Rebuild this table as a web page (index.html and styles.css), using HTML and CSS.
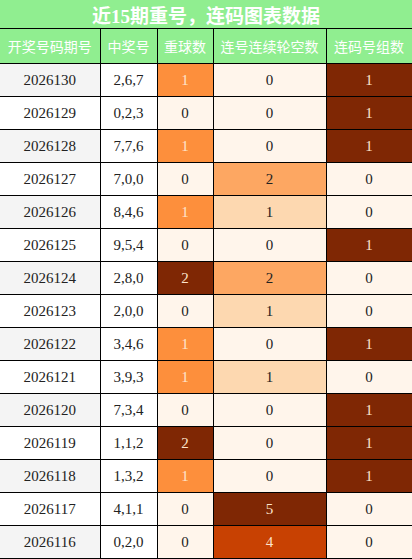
FILE: index.html
```html
<!DOCTYPE html>
<html lang="zh">
<head>
  <meta charset="UTF-8" />
  <title>近15期重号，连码图表数据</title>
  <link rel="stylesheet" href="styles.css">
</head>
<body>
  <table class="chart">
    <colgroup>
      <col class="c-issue"><col class="c-nums"><col class="c-rep"><col class="c-gap"><col class="c-group">
    </colgroup>
    <thead>
      <tr><th colspan="5" class="title">近15期重号，连码图表数据</th></tr>
      <tr class="head">
        <th>开奖号码期号</th><th>中奖号</th><th>重球数</th><th>连号连续轮空数</th><th>连码号组数</th>
      </tr>
    </thead>
    <tbody>
      <tr><td>2026130</td><td>2,6,7</td><td class="h3">1</td><td class="h0">0</td><td class="h5">1</td></tr>
      <tr><td>2026129</td><td>0,2,3</td><td class="h0">0</td><td class="h0">0</td><td class="h5">1</td></tr>
      <tr><td>2026128</td><td>7,7,6</td><td class="h3">1</td><td class="h0">0</td><td class="h5">1</td></tr>
      <tr><td>2026127</td><td>7,0,0</td><td class="h0">0</td><td class="h2">2</td><td class="h0">0</td></tr>
      <tr><td>2026126</td><td>8,4,6</td><td class="h3">1</td><td class="h1">1</td><td class="h0">0</td></tr>
      <tr><td>2026125</td><td>9,5,4</td><td class="h0">0</td><td class="h0">0</td><td class="h5">1</td></tr>
      <tr><td>2026124</td><td>2,8,0</td><td class="h5">2</td><td class="h2">2</td><td class="h0">0</td></tr>
      <tr><td>2026123</td><td>2,0,0</td><td class="h0">0</td><td class="h1">1</td><td class="h0">0</td></tr>
      <tr><td>2026122</td><td>3,4,6</td><td class="h3">1</td><td class="h0">0</td><td class="h5">1</td></tr>
      <tr><td>2026121</td><td>3,9,3</td><td class="h3">1</td><td class="h1">1</td><td class="h0">0</td></tr>
      <tr><td>2026120</td><td>7,3,4</td><td class="h0">0</td><td class="h0">0</td><td class="h5">1</td></tr>
      <tr><td>2026119</td><td>1,1,2</td><td class="h5">2</td><td class="h0">0</td><td class="h5">1</td></tr>
      <tr><td>2026118</td><td>1,3,2</td><td class="h3">1</td><td class="h0">0</td><td class="h5">1</td></tr>
      <tr><td>2026117</td><td>4,1,1</td><td class="h0">0</td><td class="h5">5</td><td class="h0">0</td></tr>
      <tr><td>2026116</td><td>0,2,0</td><td class="h0">0</td><td class="h4">4</td><td class="h0">0</td></tr>
    </tbody>
  </table>
</body>
</html>
```

FILE: styles.css
```css
body {
  margin: 0;
  background: #fff;
  font-family: "Liberation Serif", "Noto Sans CJK SC", serif;
}
.chart {
  width: 412px;
  border-collapse: collapse;
  table-layout: fixed;
  color: #222;
}
.c-issue { width: 100px; }
.c-nums { width: 57px; }
.c-rep { width: 56px; }
.c-gap { width: 113px; }
.c-group { width: 86px; }
.chart th, .chart td {
  border: 1px solid #000;
  text-align: center;
  padding: 0;
}
.chart .title {
  height: 28px;
  background: #90ee90;
  color: #fff;
  font-size: 19px;
  font-weight: bold;
  border-top: none;
  border-left: none;
  border-right: none;
}
.head th {
  height: 34px;
  background: #90ee90;
  color: #fff;
  font-family: "Noto Sans CJK SC", sans-serif;
  font-size: 14px;
  font-weight: normal;
}
.chart td {
  height: 32px;
  font-size: 15px;
  background: #fff;
}
.chart th:first-child, .chart td:first-child {
  border-left: none;
}
.chart tbody tr:nth-child(odd) td:first-child {
  background: #f4f4f4;
}
.chart td.h0 { background: #fff5eb; }
.chart td.h1 { background: #fdd8b0; }
.chart td.h2 { background: #fda762; }
.chart td.h3 { background: #fd8f3c; color: #fde4cc; }
.chart td.h4 { background: #c84102; color: #fde4cc; }
.chart td.h5 { background: #7f2704; color: #fde4cc; }
```
